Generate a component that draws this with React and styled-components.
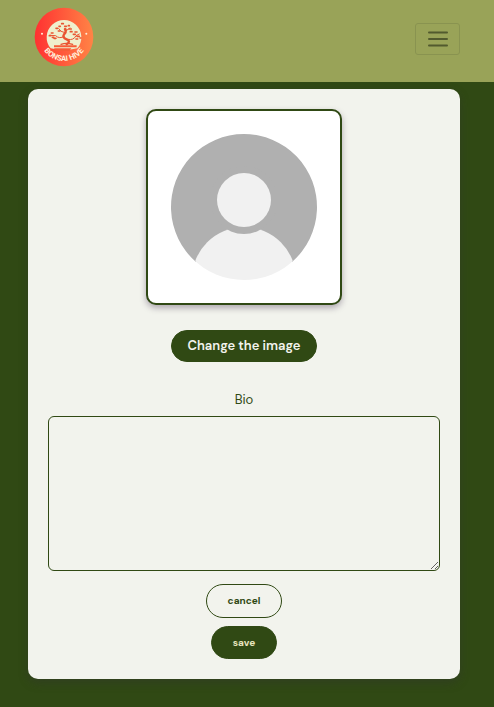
import React, { useState } from 'react';
import styled, { createGlobalStyle, css } from 'styled-components';

const GlobalStyle = createGlobalStyle`
  *, *::before, *::after { box-sizing: border-box; }
  body {
    margin: 0;
    background: #304914;
    color: #304914;
    font-family: "DM Sans", Inter, "Liberation Sans", sans-serif;
  }
`;

const Page = styled.div`
  min-height: 100vh;
`;

const Header = styled.header`
  display: flex;
  align-items: center;
  justify-content: space-between;
  height: 82px;
  padding: 0 34px;
  background: #99a358;
`;

const Brand = styled.a`
  display: block;
  height: 68px;
  svg { display: block; width: 60px; height: 60px; }
`;

const Toggler = styled.button`
  display: flex;
  align-items: center;
  justify-content: center;
  width: 45px;
  height: 32px;
  margin-bottom: 4px;
  padding: 0;
  border: 1px solid #899350;
  border-radius: 3px;
  background: transparent;
  cursor: pointer;
`;

const Card = styled.main`
  display: flex;
  flex-direction: column;
  align-items: center;
  margin: 7px 34px 28px 28px;
  padding: 20px;
  border-radius: 10px;
  background: #f2f3ed;
  box-shadow: 0 4px 10px rgba(50, 50, 50, 0.4);
`;

const Avatar = styled.svg`
  display: block;
  width: 196px;
  height: 196px;
  border: 2px solid #304914;
  border-radius: 10px;
  background: #fff;
  box-shadow: 0 3px 6px rgba(50, 30, 60, 0.35);
`;

const Form = styled.form`
  display: flex;
  flex-direction: column;
  align-items: center;
  width: 100%;
`;

const Button = styled.button`
  padding: 0;
  border: 1px solid #304914;
  border-radius: 20px;
  font-family: inherit;
  font-size: 10px;
  font-weight: 700;
  line-height: 14px;
  cursor: pointer;
  ${({ $kind }) => $kind === 'image' && css`
    width: 146px;
    height: 32px;
    margin: 25px 0 28px;
    background: #304914;
    color: #f2f3ed;
    font-size: 13px;
    font-weight: 600;
  `}
  ${({ $kind }) => $kind === 'outline' && css`
    width: 76px;
    height: 34px;
    background: transparent;
    color: #304914;
  `}
  ${({ $kind }) => $kind === 'solid' && css`
    width: 66px;
    height: 33px;
    background: #304914;
    color: #e6e4bd;
  `}
`;

const Label = styled.label`
  font-size: 13px;
  line-height: 20px;
`;

const Bio = styled.textarea`
  display: block;
  width: 100%;
  height: 155px;
  margin: 6px 0 13px;
  padding: 8px;
  border: 1px solid #304914;
  border-radius: 6px;
  background: transparent;
  color: #304914;
  font: inherit;
  font-size: 13px;
  resize: both;
`;

const Actions = styled.div`
  display: flex;
  flex-direction: column;
  align-items: center;
  gap: 8px;
`;

function Logo() {
  return (
    <svg viewBox="0 0 180 180" role="img" aria-label="Bonsai Hive">
      <defs>
        <linearGradient id="ember" x1="0" x2="1" y1="0" y2="0">
          <stop offset="0" stopColor="#ff3131" />
          <stop offset="1" stopColor="#ff8446" />
        </linearGradient>
        <path id="rim" d="M16 88 A74 74 0 0 0 164 88" />
      </defs>
      <circle cx="90" cy="90" r="88" fill="url(#ember)" />
      <path d="M50 124 A52 52 0 1 1 130 124 Q90 134 50 124Z" fill="#eff0ce" />
      <circle cx="24" cy="80" r="3" fill="#fff0dc" />
      <circle cx="157" cy="80" r="3" fill="#fff0dc" />
      <g fill="none" stroke="#e95532" strokeLinecap="round" strokeLinejoin="round">
        <path d="M98 112 Q112 103 98 97 Q84 91 90 82 Q98 77 93 66" strokeWidth="7" />
        <path d="M91 88 Q76 97 65 86 L48 85 M92 77 Q79 75 74 65 M95 72 L108 63 M102 97 Q119 101 126 86 L136 81" strokeWidth="3" />
        <path d="M81 112 Q96 106 116 112" strokeWidth="4" />
        <path
          d="M46 86h4m2 -8h5m-2 13h4M66 64h5m2 8h5m-3 -14h4m4 -8h5m4 8h5m-5 9h4m7 -11h3m-1 10h7m-3 8h5M118 82h6m-1 -7h6m0 13h7m-10 8h5m7 -3h3M60 94h6"
          strokeWidth="5"
        />
      </g>
      <path d="M60 115H128V121H60Z M60 124H112L106 132H66Z" fill="#f75c38" />
      <text fill="#fff1dc" fontFamily="Roboto, sans-serif" fontSize="23" fontWeight="700" textAnchor="middle">
        <textPath href="#rim" startOffset="50%">BONSAI HIVE</textPath>
      </text>
    </svg>
  );
}

function MenuIcon() {
  return (
    <svg width="20" height="18" viewBox="0 0 20 18" aria-hidden="true">
      <path d="M1 2.5H19M1 9H19M1 15.5H19" stroke="#525a2e" strokeWidth="2" strokeLinecap="round" />
    </svg>
  );
}

function ProfileAvatar() {
  return (
    <Avatar viewBox="0 0 192 192" role="img" aria-label="Profile picture">
      <defs>
        <clipPath id="shoulders"><circle cx="96" cy="96" r="73" /></clipPath>
      </defs>
      <path d="M48 151 A73 73 0 1 1 144 151Z" fill="#b0b0b0" />
      <g clipPath="url(#shoulders)">
        <circle cx="96" cy="168" r="52" fill="#f1f1f1" />
        <circle cx="96" cy="89" r="34" fill="#b0b0b0" />
      </g>
      <circle cx="96" cy="89" r="27" fill="#f1f1f1" />
    </Avatar>
  );
}

export default function App() {
  const [bio, setBio] = useState('');
  return (
    <Page>
      <GlobalStyle />
      <Header>
        <Brand href="#home"><Logo /></Brand>
        <Toggler type="button" aria-label="Toggle navigation"><MenuIcon /></Toggler>
      </Header>
      <Card>
        <ProfileAvatar />
        <Form onSubmit={(event) => event.preventDefault()}>
          <Button type="button" $kind="image">Change the image</Button>
          <Label htmlFor="bio">Bio</Label>
          <Bio id="bio" value={bio} onChange={(event) => setBio(event.target.value)} />
          <Actions>
            <Button type="button" $kind="outline" onClick={() => setBio('')}>cancel</Button>
            <Button type="submit" $kind="solid">save</Button>
          </Actions>
        </Form>
      </Card>
    </Page>
  );
}
